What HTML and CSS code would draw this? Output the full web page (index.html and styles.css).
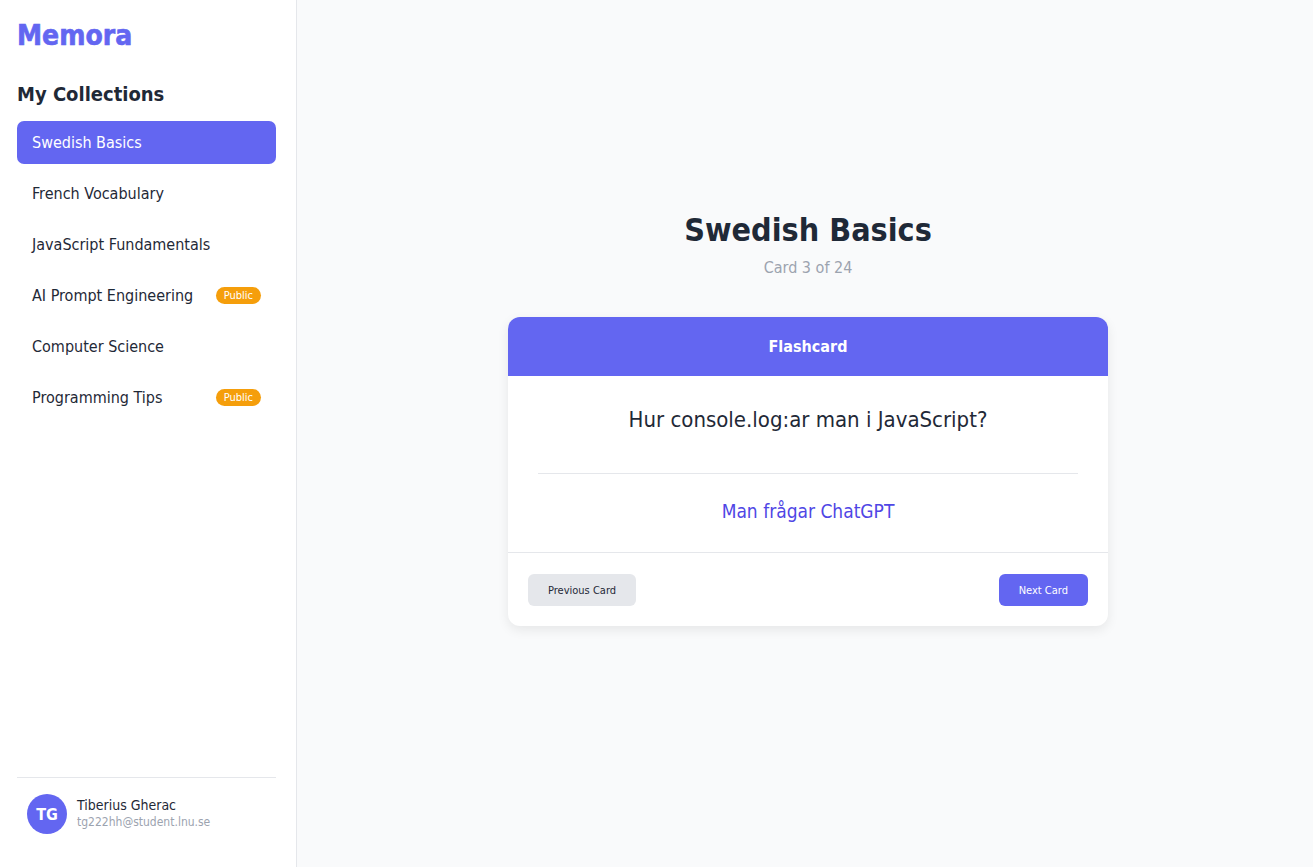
FILE: index.html
```html
<!DOCTYPE html>
<html lang="en">
<head>
<meta charset="utf-8">
<title>Memora</title>
<link rel="stylesheet" href="styles.css">
</head>
<body>
<div class="app">
  <aside class="sidebar">
    <h1 class="logo">Memora</h1>
    <h2 class="section-title">My Collections</h2>
    <ul class="collections">
      <li class="item active">Swedish Basics</li>
      <li class="item">French Vocabulary</li>
      <li class="item">JavaScript Fundamentals</li>
      <li class="item">AI Prompt Engineering <span class="badge">Public</span></li>
      <li class="item">Computer Science</li>
      <li class="item">Programming Tips <span class="badge">Public</span></li>
    </ul>
    <div class="user">
      <div class="avatar">TG</div>
      <div class="user-info">
        <div class="user-name">Tiberius Gherac</div>
        <div class="user-email">tg222hh@student.lnu.se</div>
      </div>
    </div>
  </aside>
  <main class="main">
    <div class="viewer">
      <h2 class="deck-title">Swedish Basics</h2>
      <p class="deck-count">Card 3 of 24</p>
      <section class="card">
        <div class="card-header">Flashcard</div>
        <div class="card-body">
          <p class="question">Hur console.log:ar man i JavaScript?</p>
          <hr class="divider">
          <p class="answer">Man frågar ChatGPT</p>
        </div>
        <div class="card-footer">
          <button class="btn btn-secondary">Previous Card</button>
          <button class="btn btn-primary">Next Card</button>
        </div>
      </section>
    </div>
  </main>
</div>
</body>
</html>
```
FILE: styles.css
```css
* { box-sizing: border-box; }
html, body { margin: 0; padding: 0; height: 100%; }
body {
  font-family: Tahoma, "DejaVu Sans Condensed", "DejaVu Sans", sans-serif;
  color: #1f2937;
  background: #f9fafb;
}
.app {
  display: flex;
  height: 867px;
}
.sidebar {
  width: 297px;
  flex: none;
  background: #ffffff;
  border-right: 1px solid #e5e7eb;
  padding: 17px 20px 0 17px;
  display: flex;
  flex-direction: column;
}
.logo {
  margin: 0;
  font-size: 28px;
  line-height: 38px;
  font-weight: 700;
  color: #6366f1;
  -webkit-text-stroke: 0.6px #6366f1;
}
.section-title {
  margin: 27px 0 0;
  font-size: 20px;
  line-height: 24px;
  font-weight: 700;
  color: #1f2937;
}
.collections {
  list-style: none;
  margin: 15px 0 0;
  padding: 0;
}
.item {
  height: 43px;
  margin-bottom: 8px;
  padding: 0 15px;
  border-radius: 7px;
  display: flex;
  align-items: center;
  justify-content: space-between;
  font-size: 16px;
  color: #1f2937;
}
.item.active {
  background: #6366f1;
  color: #ffffff;
}
.badge {
  background: #f59e0b;
  color: #ffffff;
  font-size: 11px;
  line-height: 17px;
  padding: 0 8px;
  border-radius: 9px;
}
.user {
  margin-top: auto;
  border-top: 1px solid #e5e7eb;
  padding: 16px 10px 0;
  height: 90px;
  display: flex;
  align-items: flex-start;
  gap: 10px;
}
.avatar {
  width: 40px;
  height: 40px;
  border-radius: 50%;
  background: #6366f1;
  color: #ffffff;
  font-weight: 700;
  font-size: 16px;
  display: flex;
  align-items: center;
  justify-content: center;
}
.user-info {
  padding-top: 3px;
}
.user-name {
  font-size: 14px;
  line-height: 17px;
  color: #1f2937;
}
.user-email {
  font-size: 12px;
  line-height: 16px;
  color: #9ca3af;
}
.main {
  flex: 1;
  display: flex;
  justify-content: center;
  padding: 0 0 0 6px;
}
.viewer {
  width: 600px;
  padding-top: 210px;
  text-align: center;
}
.deck-title {
  margin: 0;
  font-size: 32px;
  line-height: 40px;
  font-weight: 700;
  color: #1f2937;
}
.deck-count {
  margin: 8px 0 0;
  font-size: 16px;
  line-height: 20px;
  color: #9ca3af;
}
.card {
  margin-top: 39px;
  background: #ffffff;
  border-radius: 12px;
  box-shadow: 0 4px 12px rgba(0, 0, 0, 0.08);
  overflow: hidden;
}
.card-header {
  height: 59px;
  background: #6366f1;
  color: #ffffff;
  font-weight: 700;
  font-size: 16px;
  display: flex;
  align-items: center;
  justify-content: center;
}
.card-body {
  padding: 29px 30px 28px;
}
.question {
  margin: 0;
  font-size: 22px;
  line-height: 30px;
  color: #1f2937;
}
.divider {
  border: 0;
  border-top: 1px solid #e5e7eb;
  margin: 38px 0 24px;
}
.answer {
  margin: 0;
  font-size: 19px;
  line-height: 26px;
  color: #4f46e5;
}
.card-footer {
  border-top: 1px solid #e5e7eb;
  padding: 21px 20px 20px;
  display: flex;
  justify-content: space-between;
}
.btn {
  font-family: inherit;
  border: 0;
  border-radius: 6px;
  height: 32px;
  padding: 0 20px;
  font-size: 11px;
}
.btn-secondary {
  background: #e5e7eb;
  color: #1f2937;
}
.btn-primary {
  background: #6366f1;
  color: #ffffff;
}
```
